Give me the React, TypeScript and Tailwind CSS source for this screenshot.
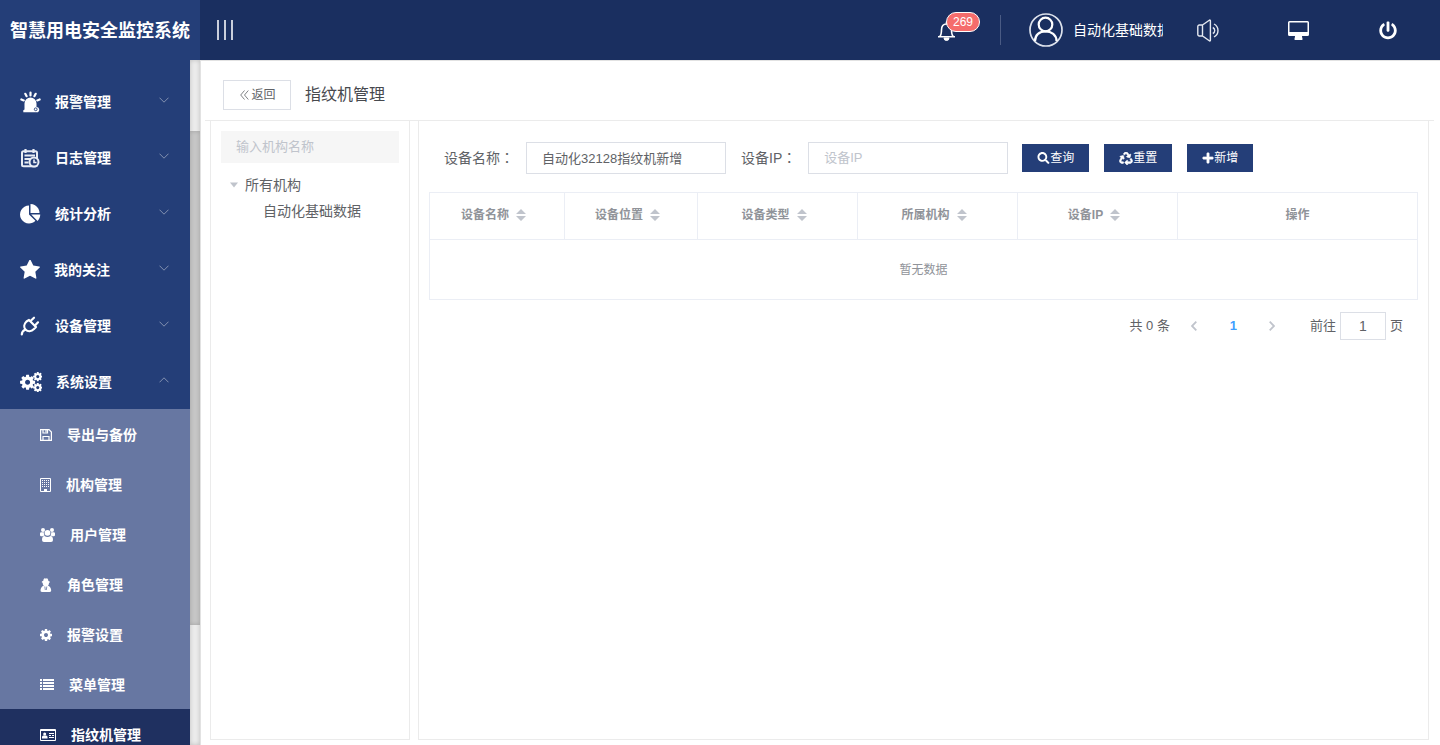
import { useState } from "react";
import type { ReactNode } from "react";
import { FaPlus, FaPowerOff, FaRecycle, FaSearch } from "react-icons/fa";

const gearPath =
  "M1152 896q0-106-75-181t-181-75-181 75-75 181 75 181 181 75 181-75 75-181zm512-109v222q0 12-8 23t-20 13l-185 28q-19 54-39 91 35 50 107 138 10 12 10 25t-9 23q-27 37-99 108t-94 71q-12 0-26-9l-138-108q-44 23-91 38-16 136-29 186-7 28-36 28h-222q-14 0-24.500-8.500t-11.500-21.500l-28-184q-49-16-90-37l-141 107q-10 9-25 9-14 0-25-11-126-114-165-168-7-10-7-23 0-12 8-23 15-21 51-66.500t54-70.500q-27-50-41-99l-183-27q-13-2-21-12.500t-8-23.500v-222q0-12 8-23t19-13l186-28q14-46 39-92-40-57-107-138-10-12-10-24 0-10 9-23 26-36 98.500-107.500t94.500-71.500q13 0 26 10l138 107q44-23 91-38 16-136 29-186 7-28 36-28h222q14 0 24.500 8.500t11.500 21.500l28 184q49 16 90 37l142-107q9-9 24-9 13 0 25 10 129 119 165 170 7 8 7 22 0 12-8 23-15 21-51 66.500t-54 70.500q26 50 41 98l183 28q13 2 21 12.500t8 23.500z";

function SirenIcon() {
  return (
    <svg viewBox="0 0 21 22" className="h-[22px] w-[21px]" fill="#fff" aria-hidden="true">
      <path d="M4.500 12.500a6 6 0 0 1 12 0V16a2.900 2.900 0 0 1 1.500 5.300H3.300v-2l1.200-.8z" />
      <g stroke="#fff" strokeWidth="2.200" strokeLinecap="round">
        <path d="M10.500 1.600v2.800M5.300 2.800l1.300 2.400M15.700 2.800l-1.300 2.400M1.400 8.500l2.300.9M19.600 8.500l-2.300.9" />
      </g>
      <circle cx="15.700" cy="18.300" r="1.400" fill="none" stroke="#243e78" strokeWidth=".9" />
    </svg>
  );
}

function LogIcon() {
  return (
    <svg viewBox="0 0 21 20" className="h-[20px] w-[21px]" fill="none" stroke="#e9edf5" aria-hidden="true">
      <rect x="2" y="3.200" width="15" height="15" rx="1.500" strokeWidth="2" />
      <path d="M5.500 1v4M13.500 1v4" strokeWidth="2.200" />
      <path d="M4.500 7.500h10.500M4.500 11h6M4.500 14.500h4" strokeWidth="2" />
      <circle cx="14" cy="14" r="4.500" fill="#243e78" strokeWidth="2" />
      <path d="M14 11.500V14.500h2.500" strokeWidth="1.600" />
    </svg>
  );
}

function PieIcon() {
  return (
    <svg viewBox="0 0 1792 1792" className="h-[21px] w-[21px]" fill="#fff" aria-hidden="true">
      <path d="M768 890l546 546q-106 108-247.500 168t-298.500 60q-209 0-385.500-103t-279.500-279.500-103-385.500 103-385.500 279.500-279.500 385.500-103v762zm187 6h773q0 157-60 298.500t-168 247.500zm709-128h-768v-768q209 0 385.500 103t279.500 279.500 103 385.500z" />
    </svg>
  );
}

function StarIcon() {
  return (
    <svg viewBox="64 64 1664 1664" className="h-[20px] w-[20px]" fill="#fff" aria-hidden="true">
      <path d="M1728 647q0 22-26 48l-363 354 86 500q1 7 1 20 0 21-10.500 35.500t-30.500 14.500q-19 0-40-12l-449-236-449 236q-22 12-40 12-21 0-31.500-14.500t-10.500-35.500q0-6 2-20l86-500-364-354q-25-27-25-48 0-37 56-46l502-73 225-455q19-41 49-41t49 41l225 455 502 73q56 9 56 46z" />
    </svg>
  );
}

function PlugIcon() {
  return (
    <svg viewBox="0 0 21 20" className="h-[20px] w-[21px]" fill="none" stroke="#fff" strokeWidth="2.200" strokeLinecap="round" aria-hidden="true">
      <path d="M1.800 18.500c0-2.300 1.200-3.800 3.200-4.800" />
      <path d="M9 4l7 7-2 2c-2.800 2.800-6.200 2.800-8.300.7S3.700 8.300 6.500 5.500z" strokeLinejoin="round" />
      <path d="M10.500 5L14 1.700M15 9.500L18 6.300" />
    </svg>
  );
}

function CogsIcon() {
  return (
    <svg viewBox="0 0 22 20" className="h-[20px] w-[22px]" fill="#fff" aria-hidden="true">
      <path d={gearPath} transform="translate(-1.200 1.500) scale(.0098)" />
      <path d={gearPath} transform="translate(12.300 -.9) scale(.0061)" />
      <path d={gearPath} transform="translate(12.300 10.100) scale(.0061)" />
    </svg>
  );
}

function CogIcon() {
  return (
    <svg viewBox="128 128 1536 1536" className="h-[12px] w-[12px]" fill="#fff" aria-hidden="true">
      <path d={gearPath} />
    </svg>
  );
}

function UsersIcon() {
  return (
    <svg viewBox="0 0 15 14" className="h-[14px] w-[15px]" fill="#fff" aria-hidden="true">
      <circle cx="3" cy="2" r="2" />
      <circle cx="12" cy="2" r="2" />
      <circle cx="7.500" cy="4.800" r="2.900" />
      <path d="M0 7V5.500Q0 4.200 1.200 4.200h2.600q-.2 2 .9 3.300-1 .2-1.700.8H1.300Q0 8.300 0 7zM15 7V5.500q0-1.300-1.200-1.300h-2.600q.2 2-.9 3.300 1 .2 1.700.8h1.700Q15 8.300 15 7z" />
      <path d="M4.600 8q1.300 1 2.900 1t2.900-1q2.600.2 2.600 4 0 2-2 2H4q-2 0-2-2 0-3.800 2.600-4z" />
    </svg>
  );
}

function SecretIcon() {
  return (
    <svg viewBox="0 0 12 14" className="h-[14px] w-[12px]" fill="#fff" aria-hidden="true">
      <path d="M3.200 3C3.500 1 4 .2 4.700.2c.5 0 .8.3 1.100.3s.6-.3 1.100-.3C7.600.2 8.100 1 8.400 3q1.600.4 1.600.9 0 .6-1 .9.200 1.600-1 2.900 2.700.8 3.200 4.300.3 2-1.500 2H2q-1.800 0-1.500-2 .5-3.500 3.200-4.300-1.200-1.300-1-2.900-1-.3-1-.9t1.500-.9z" />
      <path d="M4.800 8.500l.5 3.500M6.800 8.500L6.300 12" stroke="#6777a2" strokeWidth=".8" />
    </svg>
  );
}

function SaveIcon() {
  return (
    <svg viewBox="0 0 12 12" className="h-[12px] w-[12px]" fill="none" stroke="#fff" strokeWidth="1.200" aria-hidden="true">
      <path d="M.6.6h8.400l2.400 2.400v8.400H.6zM3 11.500v-4h6v4M3 .5v3.500h4.500v-3.500" />
      <path d="M6 .5v3" />
    </svg>
  );
}

function BuildingIcon() {
  return (
    <svg viewBox="0 0 11 14" className="h-[14px] w-[11px]" aria-hidden="true">
      <path d="M.5.5h10v13H.5z" fill="none" stroke="#fff" />
      <path d="M2.500 2v8M4.500 2v8M6.500 2v8M8.500 2v8" stroke="#fff" strokeDasharray="1 1" />
      <path d="M4 11h3v2.500H4z" fill="#fff" />
    </svg>
  );
}

function ListIcon() {
  return (
    <svg viewBox="0 0 14 12" className="h-[12px] w-[14px]" fill="#fff" aria-hidden="true">
      <path d="M0 0h2v2H0zM3 0h11v2H3zM0 3h2v2H0zM3 3h11v2H3zM0 6h2v2H0zM3 6h11v2H3zM0 9h2v2H0zM3 9h11v2H3z" />
    </svg>
  );
}

function IdCardIcon() {
  return (
    <svg viewBox="0 0 16 12" className="h-[12px] w-[16px]" fill="#fff" aria-hidden="true">
      <path fillRule="evenodd" d="M1 0h14a1 1 0 0 1 1 1v10a1 1 0 0 1-1 1H1a1 1 0 0 1-1-1V1a1 1 0 0 1 1-1zM1 2v9h14V2z" />
      <circle cx="4.700" cy="5" r="1.500" />
      <path d="M2 9.500V8a1.500 1.500 0 0 1 1.500-1.500h2.500A1.500 1.500 0 0 1 7.500 8v1.500zM9 4h5v1H9zM9 6h2v1H9zM12 6h2v1h-2zM9 8h5v1H9z" />
    </svg>
  );
}

function Chevron({ open }: { open?: boolean }) {
  return (
    <svg viewBox="0 0 10 6" className="h-[6px] w-[10px]" fill="none" stroke="#8391b1" aria-hidden="true">
      <path d={open ? "M.5 5.300L5 .8l4.500 4.500" : "M.5.7L5 5.200 9.500.7"} />
    </svg>
  );
}

function BellIcon() {
  return (
    <svg viewBox="0 0 19 20" className="h-[20px] w-[19px]" fill="none" stroke="#fff" strokeWidth="1.600" aria-hidden="true">
      <path d="M9.500.8v2M1 15.700h17M2.700 15.500c1.600-1.500 1.800-3.500 1.800-6.500 0-4 2-6 5-6s5 2 5 6c0 3 .2 5 1.800 6.500" />
      <path d="M7 17h5a2.500 2.500 0 0 1-5 0z" fill="#fff" strokeWidth="1" />
    </svg>
  );
}

function AvatarIcon() {
  return (
    <svg viewBox="0 0 34 34" className="h-[34px] w-[34px] shrink-0" fill="none" aria-hidden="true">
      <circle cx="17" cy="17" r="16" stroke="#dde2ec" strokeWidth="1.700" />
      <circle cx="16.500" cy="11.500" r="6.800" stroke="#fff" strokeWidth="2.200" />
      <path d="M6 28c0-6 4.500-9.700 10.500-9.700S27.500 22 27.500 28" stroke="#fff" strokeWidth="2.200" />
    </svg>
  );
}

function SpeakerIcon() {
  return (
    <svg viewBox="0 0 23 23" className="h-[23px] w-[23px]" fill="none" stroke="#e4e8f0" strokeWidth="1.400" aria-hidden="true">
      <path d="M5.500 6L12.300 1.200a.7.7 0 0 1 1.100.6v19.400a.7.7 0 0 1-1.100.6L5.500 17H2.300A1.500 1.500 0 0 1 .8 15.500v-8A1.500 1.500 0 0 1 2.300 6zM5.500 6v11" />
      <path d="M15.800 8.500a3.300 3.300 0 0 1 0 6M17 5a7.300 7.300 0 0 1 0 13" />
    </svg>
  );
}

function DesktopIcon() {
  return (
    <svg viewBox="0 0 21 19" className="h-[19px] w-[21px]" aria-hidden="true">
      <path fill="#fff" fillRule="evenodd" d="M1.500 0h18A1.500 1.500 0 0 1 21 1.500v12a1.500 1.500 0 0 1-1.500 1.500H14c0 1.500.5 2 .5 3s-.3 1-1 1h-6c-.7 0-1 0-1-1s.5-1.500.5-3H1.500A1.500 1.500 0 0 1 0 13.500v-12A1.500 1.500 0 0 1 1.500 0zM1.500 1.500V11h18V1.500z" />
    </svg>
  );
}

function SortIcon() {
  return (
    <span className="flex w-[24px] justify-center">
      <svg viewBox="0 0 10 12" className="h-[12px] w-[10px]" fill="#c0c4cc" aria-hidden="true">
        <path d="M5 0l5 5H0zM5 12l5-5H0z" />
      </svg>
    </span>
  );
}

type Item = { label: string; icon: ReactNode; open?: boolean; active?: boolean };

const menu: Item[] = [
  { label: "报警管理", icon: <SirenIcon /> },
  { label: "日志管理", icon: <LogIcon /> },
  { label: "统计分析", icon: <PieIcon /> },
  { label: "我的关注", icon: <StarIcon /> },
  { label: "设备管理", icon: <PlugIcon /> },
  { label: "系统设置", icon: <CogsIcon />, open: true },
];

const subMenu: Item[] = [
  { label: "导出与备份", icon: <SaveIcon /> },
  { label: "机构管理", icon: <BuildingIcon /> },
  { label: "用户管理", icon: <UsersIcon /> },
  { label: "角色管理", icon: <SecretIcon /> },
  { label: "报警设置", icon: <CogIcon /> },
  { label: "菜单管理", icon: <ListIcon /> },
  { label: "指纹机管理", icon: <IdCardIcon />, active: true },
];

const columns = [
  { label: "设备名称", width: "w-[135px]", sortable: true },
  { label: "设备位置", width: "w-[133px]", sortable: true },
  { label: "设备类型", width: "w-[160px]", sortable: true },
  { label: "所属机构", width: "w-[160px]", sortable: true },
  { label: "设备IP", width: "w-[160px]", sortable: true },
  { label: "操作", width: "w-[240px]", sortable: false },
];

const actions = [
  { label: "查询", icon: <FaSearch className="h-[12px] w-[13px]" /> },
  { label: "重置", icon: <FaRecycle className="h-[13px] w-[14px]" stroke="#fff" strokeWidth="24" /> },
  { label: "新增", icon: <FaPlus className="h-[12px] w-[12px]" stroke="#fff" strokeWidth="24" /> },
];

function Header() {
  return (
    <header className="flex h-[60px] shrink-0 items-center bg-[#1a2f60] text-white">
      <h1 className="flex h-full w-[200px] shrink-0 items-center justify-center bg-[#243e78] pt-[2px] text-[18px] leading-[24px] font-bold whitespace-nowrap">
        智慧用电安全监控系统
      </h1>
      <button type="button" aria-label="折叠菜单" className="ml-[17px] flex h-[20px] gap-[5px]">
        <span className="w-[2px] bg-[#c9cfdc]" />
        <span className="w-[2px] bg-[#c9cfdc]" />
        <span className="w-[2px] bg-[#c9cfdc]" />
      </button>
      <div className="ml-auto flex h-full items-center pr-[7px]">
        <button type="button" aria-label="报警消息" className="relative mt-[2px]">
          <BellIcon />
          <span className="absolute -top-[9px] left-[9px] flex h-[20px] w-[34px] items-center justify-center rounded-full border border-white bg-[#f56c6c] text-[12px] leading-[18px]">
            269
          </span>
        </button>
        <span className="ml-[44px] h-[30px] w-px bg-[#4a5b84]" />
        <div className="ml-[28px] flex items-center gap-[10px]">
          <AvatarIcon />
          <span className="w-[90px] overflow-hidden text-[14px] leading-[20px] whitespace-nowrap">自动化基础数据</span>
        </div>
        <button type="button" aria-label="声音" className="flex h-full w-[90px] items-center justify-center">
          <SpeakerIcon />
        </button>
        <button type="button" aria-label="大屏" className="flex h-full w-[90px] items-center justify-center">
          <DesktopIcon />
        </button>
        <button type="button" aria-label="退出" className="flex h-full w-[90px] items-center justify-center">
          <FaPowerOff className="h-[19px] w-[18px]" />
        </button>
      </div>
    </header>
  );
}

function Sidebar() {
  return (
    <div className="flex w-[200px] shrink-0">
      <nav className="min-w-0 flex-1 overflow-hidden bg-[#243e78] pt-[13px] text-[14px] leading-[20px] font-bold text-white">
        <ul>
          {menu.map((item) => (
            <li key={item.label}>
              <a href="#" className="flex h-[56px] items-center gap-[14px] pt-[2px] pr-[21px] pl-[20px]">
                {item.icon}
                <span className="flex-1">{item.label}</span>
                <span className="pb-[4px]">
                  <Chevron open={item.open} />
                </span>
              </a>
            </li>
          ))}
        </ul>
        <ul className="bg-[#6777a2]">
          {subMenu.map((item) => (
            <li key={item.label} className={item.active ? "bg-[#1f3060]" : ""}>
              <a href="#" className="flex h-[50px] items-center gap-[15px] pt-[2px] pl-[40px]">
                {item.icon}
                <span>{item.label}</span>
              </a>
            </li>
          ))}
        </ul>
      </nav>
      <div className="flex w-[10px] flex-col bg-[#ededed] shadow-[inset_0_0_5px_rgba(0,0,0,0.2)]">
        <div className="grow-[71]" />
        <div className="grow-[494] bg-[#c8c8c8] shadow-[inset_0_0_5px_rgba(0,0,0,0.2)]" />
        <div className="grow-[120]" />
      </div>
    </div>
  );
}

function OrgPanel() {
  return (
    <aside className="w-[200px] shrink-0 border border-t-0 border-[#ebebeb] p-[10px] text-[#606266]">
      <input
        type="text"
        aria-label="输入机构名称"
        placeholder="输入机构名称"
        className="block h-[32px] w-full bg-[#f6f6f6] px-[15px] pb-[2px] text-[13px] outline-none placeholder:text-[#c0c4cc]"
      />
      <ul className="mt-[9px] text-[14px] leading-[26px]">
        <li>
          <div className="flex items-center gap-[6px] pl-[8px]">
            <svg viewBox="0 0 10 6" className="h-[6px] w-[10px]" fill="#c0c4cc" aria-hidden="true">
              <path d="M1 .5h8L5 5.500z" />
            </svg>
            所有机构
          </div>
          <ul>
            <li className="pl-[42px]">自动化基础数据</li>
          </ul>
        </li>
      </ul>
    </aside>
  );
}

function Colon() {
  return <span className="font-['Noto_Sans_CJK_TC',sans-serif]">：</span>;
}

function DevicePanel() {
  const [name, setName] = useState("自动化32128指纹机新增");
  const [ip, setIp] = useState("");
  const [page, setPage] = useState("1");
  const field = "h-[32px] w-[200px] border border-[#dcdfe6] px-[15px] pb-[2px] text-[13px] outline-none placeholder:text-[#c0c4cc]";
  return (
    <section className="min-w-0 flex-1 border border-t-0 border-[#ebebeb] pt-[21px] pr-[11px] pl-[10px] text-[#606266]">
      <form className="flex items-center pl-[15px] text-[14px] leading-[20px]" onSubmit={(e) => e.preventDefault()}>
        <label htmlFor="device-name" className="pr-[12px] pb-[2px] whitespace-nowrap">
          设备名称
          <Colon />
        </label>
        <input id="device-name" type="text" value={name} onChange={(e) => setName(e.target.value)} className={field} />
        <label htmlFor="device-ip" className="pr-[12px] pb-[2px] pl-[15px] whitespace-nowrap">
          设备IP
          <Colon />
        </label>
        <input id="device-ip" type="text" placeholder="设备IP" value={ip} onChange={(e) => setIp(e.target.value)} className={field} />
        <div className="ml-[14px] flex gap-[15px]">
          {actions.map((action) => (
            <button key={action.label} type="button" className="flex h-[28px] items-center bg-[#243e78] px-[15px] text-[12px] leading-[16px] whitespace-nowrap text-white">
              {action.icon}
              {action.label}
            </button>
          ))}
        </div>
      </form>
      <table className="mt-[18px] w-full table-fixed border-collapse border border-[#ebeef5] text-[12px] leading-[20px] text-[#909399]">
        <thead>
          <tr>
            {columns.map((column) => (
              <th key={column.label} scope="col" className={`${column.width} h-[47px] border border-[#ebeef5] p-0 font-bold`}>
                <span className="flex items-center justify-center pb-[2px]">
                  {column.label}
                  {column.sortable && <SortIcon />}
                </span>
              </th>
            ))}
          </tr>
        </thead>
        <tbody>
          <tr>
            <td colSpan={columns.length} className="h-[60px] p-0 text-center">暂无数据</td>
          </tr>
        </tbody>
      </table>
      <div className="mt-[12px] flex items-center justify-end pr-[14px] text-[13px] leading-[28px]">
        <span className="mr-[5px]">共 0 条</span>
        <button type="button" aria-label="上一页" disabled className="flex w-[39px] justify-center">
          <svg viewBox="0 0 6 10" className="h-[10px] w-[6px]" fill="none" stroke="#c0c4cc" strokeWidth="1.800" aria-hidden="true">
            <path d="M5.300.7L1 5l4.300 4.300" />
          </svg>
        </button>
        <button type="button" className="w-[39px] text-center font-bold text-[#409eff]">1</button>
        <button type="button" aria-label="下一页" disabled className="flex w-[39px] justify-center">
          <svg viewBox="0 0 6 10" className="h-[10px] w-[6px]" fill="none" stroke="#c0c4cc" strokeWidth="1.800" aria-hidden="true">
            <path d="M.7.7L5 5 .7 9.300" />
          </svg>
        </button>
        <label htmlFor="page" className="mr-[4px] ml-[18px]">前往</label>
        <input
          id="page"
          type="text"
          value={page}
          onChange={(e) => setPage(e.target.value)}
          className="h-[28px] w-[46px] border border-[#dcdfe6] text-center text-[14px] outline-none"
        />
        <span className="ml-[4px]">页</span>
      </div>
    </section>
  );
}

export default function App() {
  return (
    <div className="flex h-screen flex-col overflow-hidden bg-white font-['Liberation_Sans','Noto_Sans_CJK_SC',sans-serif]">
      <Header />
      <div className="flex min-h-0 flex-1">
        <Sidebar />
        <main className="flex min-w-0 flex-1 flex-col border-t border-l border-[#e2e2e2] pr-[6px] pb-[5px] pl-[4px]">
          <div className="flex h-[60px] shrink-0 items-center gap-[14px] border-b border-[#ebebeb] pt-[9px] pb-px pl-[18px]">
            <button type="button" className="flex h-[30px] w-[68px] items-center justify-center gap-[2px] border border-[#dcdfe6] pl-[2px] text-[12px] leading-[16px] text-[#606266]">
              <svg viewBox="0 0 9 10" className="h-[10px] w-[9px]" fill="none" stroke="#606266" strokeWidth=".8" aria-hidden="true">
                <path d="M4.500.5L.7 5l3.800 4.500M8.300.5L4.500 5l3.800 4.500" />
              </svg>
              返回
            </button>
            <h2 className="text-[16px] leading-[24px] text-[#47494e]">指纹机管理</h2>
          </div>
          <div className="flex min-h-0 flex-1 gap-[8px] pr-[5px] pl-[5px]">
            <OrgPanel />
            <DevicePanel />
          </div>
        </main>
      </div>
    </div>
  );
}
